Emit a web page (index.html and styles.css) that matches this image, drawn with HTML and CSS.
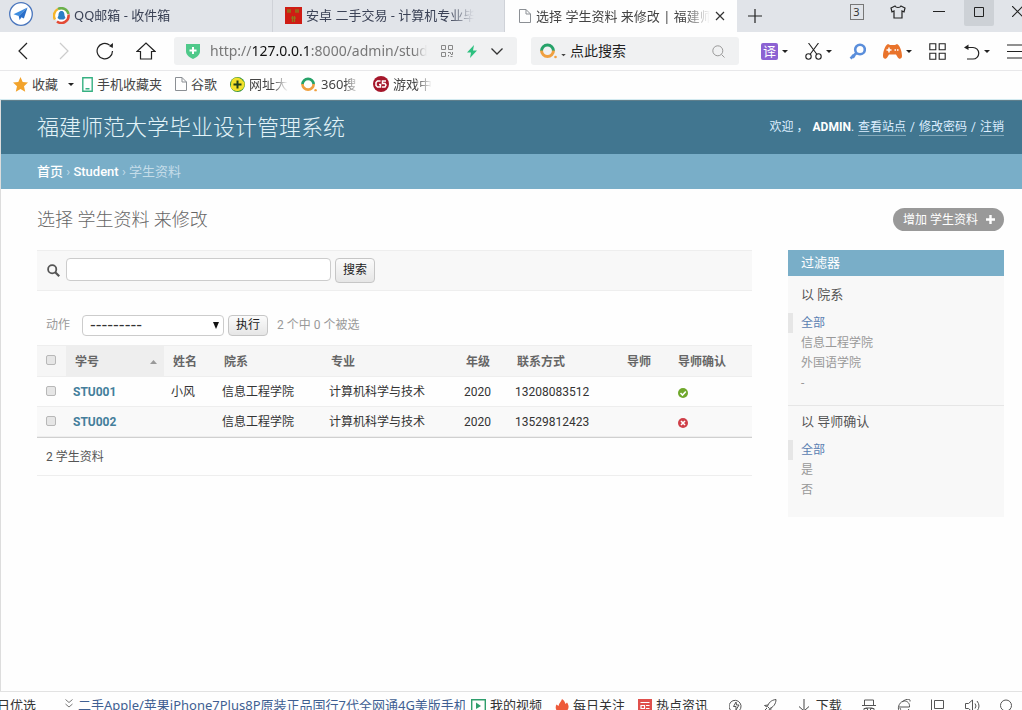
FILE: index.html
```html
<!DOCTYPE html>
<html lang="zh-CN">
<head>
<meta charset="utf-8">
<meta name="viewport" content="width=device-width, initial-scale=1">
<title>选择 学生资料 来修改</title>
<link rel="stylesheet" href="styles.css">
</head>
<body class="window">
<div class="tabbar">
  <button class="app-logo" aria-label="浏览器"><svg width="24" height="24" viewBox="0 0 24 24"><circle cx="12" cy="12" r="11.3" fill="#fff" stroke="#4a76bd" stroke-width="1.3"/><path d="M18.5 5.5 4.5 12.3l5.2 1.6z" fill="#3d8de0"/><path d="M18.5 5.5 9.7 13.9l.9 4.2 1.9-2.9 2.4 1.4z" fill="#2a6fc9"/></svg></button>
  <button class="tab">
    <svg width="17" height="17" viewBox="0 0 17 17"><circle cx="8.500" cy="8.500" r="7" fill="#fff"/><path d="M2 12.500A7.500 7.500 0 0 1 5 2" fill="none" stroke="#f5b52c" stroke-width="2.500"/><path d="M5 2a7.300 7.300 0 0 1 10.500 5" fill="none" stroke="#6ab04a" stroke-width="2.500"/><path d="M15.500 7.500A7.300 7.300 0 0 1 4 14.500" fill="none" stroke="#e34a35" stroke-width="2.500"/><path d="M8.500 4c2.500 0 3 2.500 3 4.500l1 2.500-2 1.500h-4l-2-1.500 1-2.500c0-2 .5-4.500 3-4.500z" fill="#2b7fc6"/></svg>
    <span class="tab-text">QQ邮箱 - 收件箱</span>
  </button>
  <button class="tab">
    <svg width="17" height="17" viewBox="0 0 17 17"><path fill="#cf1c14" d="M0 0h17v17H0z"/><path d="M3 2v4m2-4v4M2 4h4m5-2v4m2-4v4m-3-2h4M7.500 9v6M9.500 9v6M6 11h5" stroke="#8e7a1c" stroke-width="1.200"/></svg>
    <span class="tab-text">安卓 二手交易 - 计算机专业毕</span>
  </button>
  <div class="tab tab-active">
    <svg width="12" height="14" viewBox="0 0 12 14" fill="none" stroke="#8b8f94"><path d="M.5.5h6.500l4.500 4.500v8.500H.5zM7 .5V5h4.500"/></svg>
    <span class="tab-text">选择 学生资料 来修改 | 福建师</span>
    <button class="icon-button" aria-label="关闭标签"><svg width="10" height="10" viewBox="0 0 10 10" stroke="#333" stroke-width="1.200"><path d="m1 1 8 8M9 1 1 9"/></svg></button>
  </div>
  <button class="new-tab" aria-label="新标签"><svg width="14" height="14" viewBox="0 0 14 14" stroke="#222" stroke-width="1.200"><path d="M7 0v14M0 7h14"/></svg></button>
  <div class="window-controls">
    <button class="control"><span class="count">3</span></button>
    <button class="control" aria-label="皮肤"><svg width="16" height="14" viewBox="0 0 16 14" fill="none" stroke="#222" stroke-width="1.200"><path d="M5 1C6 3 10 3 11 1l4 2-1 4-2-1v7H4V6L2 7 1 3z"/></svg></button>
    <button class="control" aria-label="最小化"><svg width="12" height="12" viewBox="0 0 12 12" stroke="#222"><path d="M0 5.500h12"/></svg></button>
    <button class="control control-hover" aria-label="最大化"><svg width="10" height="10" viewBox="0 0 10 10" fill="none" stroke="#222"><path d="M.5.5h9v9h-9z"/></svg></button>
    <button class="control control-close" aria-label="关闭"><svg width="11" height="11" viewBox="0 0 11 11" stroke="#222" stroke-width="1.200"><path d="m0 0 11 11M11 0 0 11"/></svg></button>
  </div>
</div>

<div class="toolbar">
  <div class="nav-buttons">
    <button class="nav-button" aria-label="后退"><svg width="10" height="18" viewBox="0 0 10 18" fill="none" stroke="#222" stroke-width="1.200"><path d="M9 1 1 9l8 8"/></svg></button>
    <button class="nav-button" aria-label="前进"><svg width="10" height="18" viewBox="0 0 10 18" fill="none" stroke="#ccc" stroke-width="1.200"><path d="m1 1 8 8-8 8"/></svg></button>
    <button class="nav-button" aria-label="刷新"><svg width="18" height="18" viewBox="0 0 18 18" fill="none" stroke="#222" stroke-width="1.200"><path d="M16.500 9A7.700 7.700 0 1 1 13.500 3"/><path d="m17 1-.2 5-4-2z" fill="#222" stroke="none"/></svg></button>
    <button class="nav-button" aria-label="主页"><svg width="20" height="18" viewBox="0 0 20 18" fill="none" stroke="#222" stroke-width="1.200"><path d="M1 9.500 10 1l9 8.500h-3.500V17h-11V9.500z"/></svg></button>
  </div>
  <div class="address">
    <svg width="14" height="16" viewBox="0 0 14 16"><path d="M0 1h14v7c0 4-3 6-7 8-4-2-7-4-7-8z" fill="#4fc98a"/><path d="M7 4v7M3.500 7.500h7" stroke="#fff" stroke-width="2"/></svg>
    <span class="url">http://<span class="url-host">127.0.0.1</span>:8000/admin/stud</span>
    <svg width="12" height="12" viewBox="0 0 12 12" fill="none" stroke="#888"><path d="M.5.5h4v4h-4zM7.500.5h4v4h-4zM.5 7.500h4v4h-4zM7 7.500h2.500V9M11.500 7v2.500H10M7.500 10v1.500M9.500 11.500h2"/></svg>
    <svg width="10" height="13" viewBox="0 0 10 13"><path d="M7 0 0 7.500h4L3 13l7-7.500H6z" fill="#2cc07f"/></svg>
    <button class="icon-button" aria-label="展开"><svg width="12" height="7" viewBox="0 0 12 7" fill="none" stroke="#333" stroke-width="1.300"><path d="m.5.5 5.500 5.500L11.500.5"/></svg></button>
  </div>
  <div class="search-box">
    <svg width="17" height="16" viewBox="0 0 17 16"><path d="M1.500 8a6 6 0 0 1 12 0" fill="none" stroke="#26a269" stroke-width="3"/><path d="M1.500 7.500a6 6 0 0 0 12 0" fill="none" stroke="#f0a040" stroke-width="3"/><circle cx="15.500" cy="14" r="1.300" fill="#f0a040"/></svg>
    <svg class="engine-caret" width="5" height="3" viewBox="0 0 6 4"><path d="M0 0h6L3 3z" fill="#444"/></svg>
    <input class="search-text" type="text" placeholder="点此搜索" aria-label="点此搜索">
    <svg width="13" height="13" viewBox="0 0 13 13" fill="none" stroke="#999"><circle cx="5.800" cy="5.800" r="5"/><path d="m9.500 9.500 3 3"/></svg>
  </div>
  <div class="tools">
    <button class="tool" aria-label="翻译"><span class="translate">译</span><svg class="caret" viewBox="0 0 6 3"><path d="M0 0h6L3 3z"/></svg></button>
    <button class="tool" aria-label="截图"><svg width="17" height="17" viewBox="0 0 17 17" fill="none" stroke="#222" stroke-width="1.100"><circle cx="3.500" cy="13.500" r="2.700"/><circle cx="13.500" cy="13.500" r="2.700"/><path d="M3.500 0 12 11.500M13.500 0 5 11.500"/></svg><svg class="caret" viewBox="0 0 6 3"><path d="M0 0h6L3 3z"/></svg></button>
    <button class="tool" aria-label="密码"><svg width="17" height="17" viewBox="0 0 17 17" fill="none" stroke="#5a8edb"><circle cx="11" cy="6.500" r="4.800" stroke-width="2.600"/><path d="m7.500 10-6 5.500M3 12l2.500 2.500" stroke-width="2.600"/></svg></button>
    <button class="tool" aria-label="游戏"><svg width="19" height="15" viewBox="0 0 19 15"><path d="M5 0C2 1 0 8 0 12c0 3 3 4 4.500 1L6 10.500h7l1.500 2.500c1.500 3 4.500 2 4.500-1 0-4-2-11-5-12l-2 1H7z" fill="#e9732b"/><path d="M6 3.500v5M3.500 6h5M11.500 6h1.500M14 6h1.500" stroke="#fff" stroke-width="1.500"/></svg><svg class="caret" viewBox="0 0 6 3"><path d="M0 0h6L3 3z"/></svg></button>
    <button class="tool" aria-label="扩展"><svg width="17" height="17" viewBox="0 0 17 17" fill="none" stroke="#222" stroke-width="1.100"><path d="M.8.8h6v6h-6zM10.200.8h6v6h-6zM.8 10.200h6v6h-6zM10.200 10.200h6v6h-6z"/></svg></button>
    <button class="tool" aria-label="恢复"><svg width="17" height="17" viewBox="0 0 17 17" fill="none" stroke="#222" stroke-width="1.200"><path d="M2 4.500h8a5.700 5.700 0 0 1 0 11.500H4"/><path d="M5.500 1.500 1 4.500l4.500 2.500z" fill="#222" stroke="none"/></svg><svg class="caret" viewBox="0 0 6 3"><path d="M0 0h6L3 3z"/></svg></button>
    <button class="tool" aria-label="菜单"><svg width="17" height="15" viewBox="0 0 17 15" stroke="#222" stroke-width="1.200"><path d="M0 1h17M0 7.500h17M0 14h17"/></svg></button>
  </div>
</div>

<nav class="bookmarks">
  <a class="bookmark" href="#"><svg width="15" height="15" viewBox="0 0 15 15"><path d="m7.500 0 2.200 5 5.300.6-4 3.700 1.200 5.400-4.700-2.800-4.700 2.800L4 9.300 0 5.600 5.300 5z" fill="#f2a32c"/></svg>收藏</a>
  <svg class="caret caret-bookmark" viewBox="0 0 6 3"><path d="M0 0h6L3 3z"/></svg>
  <a class="bookmark" href="#"><svg width="11" height="15" viewBox="0 0 11 15" fill="none" stroke="#35b081" stroke-width="1.400"><path d="M.8.8h9.400v13.400H.8zM3.500 11.800h4"/></svg>手机收藏夹</a>
  <a class="bookmark" href="#"><svg width="12" height="14" viewBox="0 0 12 14" fill="none" stroke="#8b8f94"><path d="M.5.5h6.500l4.500 4.500v8.500H.5zM7 .5V5h4.500"/></svg>谷歌</a>
  <a class="bookmark" href="#"><svg width="15" height="15" viewBox="0 0 15 15"><circle cx="7.500" cy="7.500" r="7.500" fill="#2f8f3a"/><path d="M1 11A7.500 7.500 0 0 1 14.500 5.500 7.500 7.500 0 0 1 1 11" fill="#f2e02a"/><circle cx="7" cy="6.500" r="6" fill="#f2e02a"/><path d="M7.500 3.500v8M3.500 7.500h8" stroke="#1d3f1d" stroke-width="2"/></svg><span class="fade">网址大</span></a>
  <a class="bookmark" href="#"><svg width="16" height="15" viewBox="0 0 17 16"><path d="M1.500 8a6 6 0 0 1 12 0" fill="none" stroke="#26a269" stroke-width="2.800"/><path d="M1.500 7.500a6 6 0 0 0 12 0" fill="none" stroke="#f0a040" stroke-width="2.800"/><circle cx="15.500" cy="14" r="1.300" fill="#f0a040"/></svg><span class="fade">360搜</span></a>
  <a class="bookmark" href="#"><svg width="16" height="16" viewBox="0 0 16 16"><circle cx="8" cy="8" r="8" fill="#a5172b"/><path d="M7.500 5H4.500L3 6.500v3L4.500 11h3V8.500H6M13 5H9.500v2.500H12L13 9l-1 2H9" fill="none" stroke="#fff" stroke-width="1.500"/></svg><span class="fade">游戏中</span></a>
</nav>

<div class="page">
  <header class="site-header">
    <h1 class="site-name">福建师范大学毕业设计管理系统</h1>
    <div class="user-tools"><span>欢迎 ，</span><span><strong>ADMIN</strong>.</span><a href="#">查看站点</a><span>/</span><a href="#">修改密码</a><span>/</span><a href="#">注销</a></div>
  </header>
  <nav class="breadcrumbs"><a href="#">首页</a> › <a href="#">Student</a> › 学生资料</nav>

  <main class="content">
    <div class="title-row">
      <h2 class="page-title">选择 学生资料 来修改</h2>
      <a class="add-link" href="#">增加 学生资料<svg width="9" height="9" viewBox="0 0 9 9" stroke="#fff" stroke-width="2.400"><path d="M4.500 0v9M0 4.500h9"/></svg></a>
    </div>
    <div class="columns">
      <div class="changelist">
        <form class="search-form">
          <label class="search-label" for="q" aria-label="搜索"><svg width="13" height="13" viewBox="0 0 13 13" fill="none" stroke="#555" stroke-width="1.800"><circle cx="5.200" cy="5.200" r="4.100"/><path d="m8.200 8.200 4 4" stroke-width="2.200"/></svg></label>
          <input class="field search-field" id="q" type="text">
          <button class="button" type="button">搜索</button>
        </form>
        <div class="actions">
          <label for="action">动作</label>
          <span class="select-wrap"><select class="field action-select" id="action"><option>---------</option></select><svg class="select-arrow" width="6" height="7" viewBox="0 0 6 7"><path d="M0 0h6L3 7z" fill="#111"/></svg></span>
          <button class="button button-small" type="button">执行</button>
          <span class="counter">2 个中 0 个被选</span>
        </div>
        <table class="results">
          <colgroup><col class="col-check"><col class="col-id"><col class="col-short"><col class="col-dept"><col class="col-major"><col class="col-short"><col class="col-phone"><col class="col-short"><col></colgroup>
          <thead><tr>
            <th><input class="check" type="checkbox" aria-label="全选"></th>
            <th class="sorted"><span class="sort-head">学号<svg width="7" height="4" viewBox="0 0 7 4"><path d="M0 4h7L3.500 0z" fill="#999"/></svg></span></th>
            <th>姓名</th><th>院系</th><th>专业</th><th>年级</th><th>联系方式</th><th>导师</th><th>导师确认</th>
          </tr></thead>
          <tbody>
            <tr><td><input class="check" type="checkbox" aria-label="STU001"></td><td><a class="row-link" href="#">STU001</a></td><td>小风</td><td>信息工程学院</td><td>计算机科学与技术</td><td>2020</td><td>13208083512</td><td></td><td><svg class="status" width="10" height="10" viewBox="0 0 10 10"><circle cx="5" cy="5" r="5" fill="#70a82c"/><path d="m2.500 5 2 2 3.300-3.500" fill="none" stroke="#fff" stroke-width="1.600"/></svg></td></tr>
            <tr><td><input class="check" type="checkbox" aria-label="STU002"></td><td><a class="row-link" href="#">STU002</a></td><td></td><td>信息工程学院</td><td>计算机科学与技术</td><td>2020</td><td>13529812423</td><td></td><td><svg class="status" width="10" height="10" viewBox="0 0 10 10"><circle cx="5" cy="5" r="5" fill="#cf3f48"/><path d="m3 3 4 4M7 3 3 7" stroke="#fff" stroke-width="1.600"/></svg></td></tr>
          </tbody>
        </table>
        <p class="paginator">2 学生资料</p>
      </div>
      <aside class="filter">
        <h2 class="filter-title">过滤器</h2>
        <h3 class="filter-by">以 院系</h3>
        <ul class="filter-list">
          <li class="selected"><a href="#">全部</a></li><li><a href="#">信息工程学院</a></li><li><a href="#">外国语学院</a></li><li><a href="#">-</a></li>
        </ul>
        <h3 class="filter-by">以 导师确认</h3>
        <ul class="filter-list">
          <li class="selected"><a href="#">全部</a></li><li><a href="#">是</a></li><li><a href="#">否</a></li>
        </ul>
      </aside>
    </div>
  </main>
</div>

<footer class="statusbar">
  <div class="today"><span>日优选</span></div>
  <a class="promo" href="#"><svg width="8" height="9" viewBox="0 0 8 9" fill="none" stroke="#777"><path d="m.5.5 3.500 3 3.500-3M.5 5l3.500 3 3.500-3"/></svg><span class="promo-text">二手Apple/苹果iPhone7Plus8P原装正品国行7代全网通4G美版手机</span></a>
  <a class="status-link" href="#"><svg width="15" height="14" viewBox="0 0 15 14"><path d="M.7.7h13.600v12.600H.7z" fill="none" stroke="#2f9e6c" stroke-width="1.400"/><path d="M5 3.500v6.500L10 7z" fill="#2f9e6c"/></svg>我的视频</a>
  <a class="status-link" href="#"><svg width="14" height="14" viewBox="0 0 14 14"><path d="M7 0c3 2 3 4 3.500 5L12 3.500c3 4 2 9-5 10.500C0 13 0 8 1.500 5.500L3.500 7C4 4 6 3 7 0z" fill="#ee5a3a"/></svg>每日关注</a>
  <a class="status-link" href="#"><svg width="14" height="14" viewBox="0 0 14 14"><path fill="#e0504c" d="M0 0h14v14H0z"/><path d="M2.500 3.500h9M3 6.500h3.500v3H3zM8 6.500h3.500M8 9.500h3.500" fill="none" stroke="#fff" stroke-width="1.200"/></svg>热点资讯</a>
  <div class="status-icons">
    <svg width="14" height="14" viewBox="0 0 14 14" fill="none" stroke="#555"><path d="M3 12.500A6 6 0 1 1 8 13M7 3 4.500 7.500H7V11L10 6H7.500z"/></svg>
    <svg width="14" height="14" viewBox="0 0 14 14" fill="none" stroke="#555"><path d="M13 .5C8 1 5.500 4 4.500 7.500L6.500 9.500C10 8.500 13 5 13 .5zM5 6 1.500 6.500 4 8M8 9l-.5 3.500L6 10M2 11l2-2M3 13l2-2"/></svg>
    <a class="download" href="#"><svg width="12" height="14" viewBox="0 0 12 14" fill="none" stroke="#444"><path d="M6 0v12M1 7.500 6 12l5-4.500"/></svg>下载</a>
    <svg width="14" height="14" viewBox="0 0 14 14" fill="none" stroke="#555"><path d="M2.500 6V1h9v5M0 6.500h14M3.500 9h7M2 9.500h3.500v4H2zM8.500 9.500H12v4H8.500z"/></svg>
    <svg width="14" height="14" viewBox="0 0 14 14" fill="none" stroke="#555"><path d="M2 8h10.500C13 4.500 10.500 2 7.500 2 3 2 0 8 2 12M12 10c-2.500 4-8 3.500-9-1M5 3c3-3 9-4 8-.5"/></svg>
    <svg width="13" height="14" viewBox="0 0 13 14" fill="none" stroke="#555"><path d="M.5.500V14M3.500 1.500h9v8h-9z"/></svg>
    <svg width="15" height="14" viewBox="0 0 15 14" fill="none" stroke="#555"><path d="M.5 4.500h3L7.500 1v12L3.500 9.500h-3zM10 4.500q2 2.500 0 5M12 2q4 5 0 10"/></svg>
    <svg width="13" height="14" viewBox="0 0 13 14" fill="none" stroke="#555"><circle cx="6" cy="6.500" r="5.500"/><path d="m10 10.500 3 3"/></svg>
  </div>
</footer>
</body>
</html>
```
FILE: styles.css
```css
* { box-sizing: border-box; }
svg { flex: none; }
button { font: inherit; color: inherit; border: 0; padding: 0; background: none; }
a { color: inherit; text-decoration: none; }
h1, h2, h3, p, ul { margin: 0; padding: 0; font-weight: 400; }

.window {
  margin: 0;
  height: 100vh;
  display: flex;
  flex-direction: column;
  overflow: hidden;
  background: #fefefe;
  color: #333;
  font: 13px/20px "Noto Sans", "Noto Sans CJK SC", sans-serif;
}
.icon-button { display: flex; align-items: center; }

/* Tab strip */
.tabbar { flex: none; display: flex; height: 32px; background: #e1e4e9; color: #3b4256; }
.app-logo { flex: none; width: 41px; padding: 2px 8px 0 9px; display: flex; align-items: flex-start; }
.tab {
  flex: 0 1 232px;
  min-width: 0;
  display: flex;
  align-items: center;
  gap: 4px;
  padding: 0 30px 2px 12px;
  text-align: left;
  border-right: 1px solid #cfd2d8;
}
.tab-active { background: #fefefe; color: #444; padding: 0 12px 0 14px; gap: 5px; border-right: 0; }
.tab-text {
  flex: 1;
  overflow: hidden;
  white-space: nowrap;
  mask-image: linear-gradient(to right, #000 85%, transparent);
}
.new-tab { width: 36px; display: flex; align-items: center; justify-content: center; }
.window-controls { margin-left: auto; display: flex; align-items: flex-start; }
.control { width: 41px; height: 23px; display: flex; align-items: center; justify-content: center; color: #333; }
.count { width: 14px; height: 16px; border: 1px solid #777; font-size: 11px; line-height: 14px; }
.control-hover { width: 30px; height: 26px; margin: 0 5px; padding-bottom: 3px; background: #cdd1d6; border-radius: 0 0 2px 2px; }
.control-close { width: 23px; justify-content: flex-start; padding-left: 13px; overflow: hidden; }

/* Address toolbar */
.toolbar { flex: none; height: 39px; display: flex; align-items: center; overflow: hidden; border-bottom: 1px solid #e8e8ea; }
.nav-buttons { display: flex; padding: 0 8px 0 2px; }
.nav-button { width: 41px; display: flex; align-items: center; justify-content: center; }
.address, .search-box { height: 28px; display: flex; align-items: center; background: #f0f1f2; border-radius: 3px; }
.address { flex: 1 1 342px; min-width: 0; gap: 14px; padding: 0 14px 0 12px; }
.url {
  flex: 1;
  overflow: hidden;
  white-space: nowrap;
  margin-left: -4px;
  font-size: 14px;
  color: #777;
  mask-image: linear-gradient(to right, #000 94%, transparent);
}
.url-host { color: #111; }
.search-box { flex: 0 1 208px; min-width: 0; margin-left: 14px; padding: 0 14px 0 9px; gap: 4px; }
.engine-caret { margin-top: 8px; }
.search-text { flex: 1; min-width: 0; border: 0; padding: 0; background: none; font: inherit; font-size: 14px; }
.search-text::placeholder { color: #222; opacity: 1; }
.tools { flex: none; display: flex; gap: 17px; padding-left: 22px; width: 283px; }
.tool { display: flex; align-items: center; gap: 4px; }
.translate { width: 17px; height: 17px; border-radius: 2px; background: #8c62d3; color: #fff; font-size: 13px; line-height: 16px; text-align: center; }
.caret { width: 6px; height: 3px; fill: #222; }

/* Bookmarks */
.bookmarks { flex: none; height: 29px; display: flex; align-items: center; gap: 13px; padding: 0 0 2px 13px; border-bottom: 1px solid #d3eaf0; color: #444; }
.bookmark { display: flex; align-items: center; gap: 4px; white-space: nowrap; }
.caret-bookmark { margin: 0 -5px 0 -3px; }
.fade { width: 39px; overflow: hidden; mask-image: linear-gradient(to right, #000 60%, transparent); }

/* Admin page */
.page {
  flex: 1;
  min-height: 0;
  border-left: 1px solid #ddd;
  font-family: Roboto, "Noto Sans CJK SC", sans-serif;
}
.site-header { display: flex; align-items: center; justify-content: space-between; height: 54px; padding: 0 18px 0 36px; background: #417690; border-top: 1px solid #5f7f8c; color: #def; }
.site-name { font-size: 22px; line-height: 30px; font-weight: 300; color: #e2f3f8; }
.user-tools { display: flex; gap: 4px; font-size: 12px; line-height: 16px; }
.user-tools strong { color: #fff; }
.user-tools a { border-bottom: 1px solid #85a9ba; }
.breadcrumbs { height: 35px; padding: 8px 36px 7px; background: #79aec8; color: #c4dce8; font-size: 13px; line-height: 20px; }
.breadcrumbs a { color: #fff; font-weight: 500; }
.content { padding: 18px 18px 0 36px; }
.title-row { display: flex; align-items: center; justify-content: space-between; height: 25px; }
.page-title { font-size: 18px; line-height: 25px; font-weight: 300; color: #666; }
.add-link { display: flex; align-items: center; gap: 8px; height: 23px; padding: 0 9px 0 10px; border-radius: 12px; background: #999; color: #fff; font-size: 12px; }
.columns { display: flex; align-items: flex-start; gap: 36px; margin-top: 18px; }
.changelist { flex: 1; min-width: 0; }
.search-form { display: flex; align-items: flex-start; gap: 4px; height: 41px; padding: 7px 9px; background: #f8f8f8; border: solid #eee; border-width: 1px 0; }
.search-label { width: 16px; height: 25px; padding-left: 1px; display: flex; align-items: center; }
.field { border: 1px solid #ccc; border-radius: 4px; background: #fff; }
.search-field { flex: 0 1 265px; min-width: 0; height: 23px; }
.button { height: 25px; padding: 0 7px; border: 1px solid #c6c6c6; border-radius: 4px; background: linear-gradient(#fbfbfb, #e6e6e6); color: #222; font-size: 12px; line-height: 23px; }
.button-small { height: 21px; line-height: 19px; }
.actions { display: flex; align-items: center; gap: 4px; margin-top: 24px; height: 20px; padding-left: 9px; color: #999; font-size: 12px; }
.actions label { width: 32px; }
.select-wrap { position: relative; display: flex; flex: 0 1 142px; }
.action-select { appearance: none; width: 100%; height: 21px; padding: 0 7px; color: #333; font: 16px/18px "DejaVu Sans", sans-serif; }
.select-arrow { position: absolute; right: 5px; top: 7px; pointer-events: none; }
.counter { margin-left: 5px; }

.results { width: 100%; margin-top: 10px; table-layout: fixed; border-collapse: separate; border-spacing: 0; border-bottom: 1px solid #d0d0d0; font-size: 12px; line-height: 18px; }
.results th, .results td { height: 30px; padding: 0 7px; text-align: left; white-space: nowrap; border-bottom: 1px solid #eee; }
.results th { height: 32px; padding: 1px 9px 0; background: #f6f6f6; color: #666; font-weight: 700; border-top: 1px solid #eee; }
.results .sorted { background: #eee; }
.results th:first-child, .results td:first-child { padding: 0 9px 2px; }
.results td:last-child { padding: 2px 9px 0; }
.results tbody tr:nth-child(2) td { background: #f9f9f9; }
.col-check { width: 29px; }
.col-id { width: 98px; }
.col-short { width: 51px; }
.col-dept { width: 107px; }
.col-major { width: 135px; }
.col-phone { width: 110px; }
.sort-head { display: flex; align-items: center; justify-content: space-between; margin-right: -2px; }
.check { appearance: none; display: block; width: 10px; height: 10px; margin: 0; border: 1px solid #b8b8b8; border-radius: 2px; background: #e6e6e6; }
.row-link { color: #447e9b; font-weight: 700; }
.status { display: block; }
.paginator { height: 38px; padding: 9px; border-bottom: 1px solid #eee; color: #555; font-size: 12px; line-height: 20px; }

.filter { flex: none; width: 216px; background: #f8f8f8; padding-bottom: 5px; font-size: 12px; }
.filter-title { height: 26px; padding: 0 13px; background: #79aec8; color: #fff; font-size: 13px; line-height: 26px; }
.filter-by { padding: 9px 13px 8px; color: #555; font-size: 13px; line-height: 20px; }
.filter-list { list-style: none; padding-bottom: 12px; color: #999; }
.filter-list + .filter-by { padding-top: 6px; border-top: 1px solid #e6e6e6; }
.filter-list li { padding: 0 13px; line-height: 20px; }
.filter-list .selected { padding-left: 8px; border-left: 5px solid #e6e6e6; color: #5b80b2; }

/* Status bar */
.statusbar { flex: none; display: flex; align-items: flex-start; height: 19px; padding-top: 3px; overflow: hidden; border-top: 1px solid #e2e2e2; white-space: nowrap; color: #333; }
.statusbar svg { margin-top: 4px; }
.today { width: 65px; padding-right: 29px; overflow: hidden; display: flex; justify-content: flex-end; }
.promo { flex: 0 1 400px; min-width: 0; display: flex; gap: 5px; color: #3f5f92; }
.promo-text { overflow: hidden; }
.status-link { display: flex; gap: 4px; margin-left: 13px; }
.promo + .status-link { margin-left: 6px; }
.status-icons { flex: 1; display: flex; justify-content: space-between; padding: 0 9px 0 21px; }
.download { display: flex; gap: 6px; }
```
